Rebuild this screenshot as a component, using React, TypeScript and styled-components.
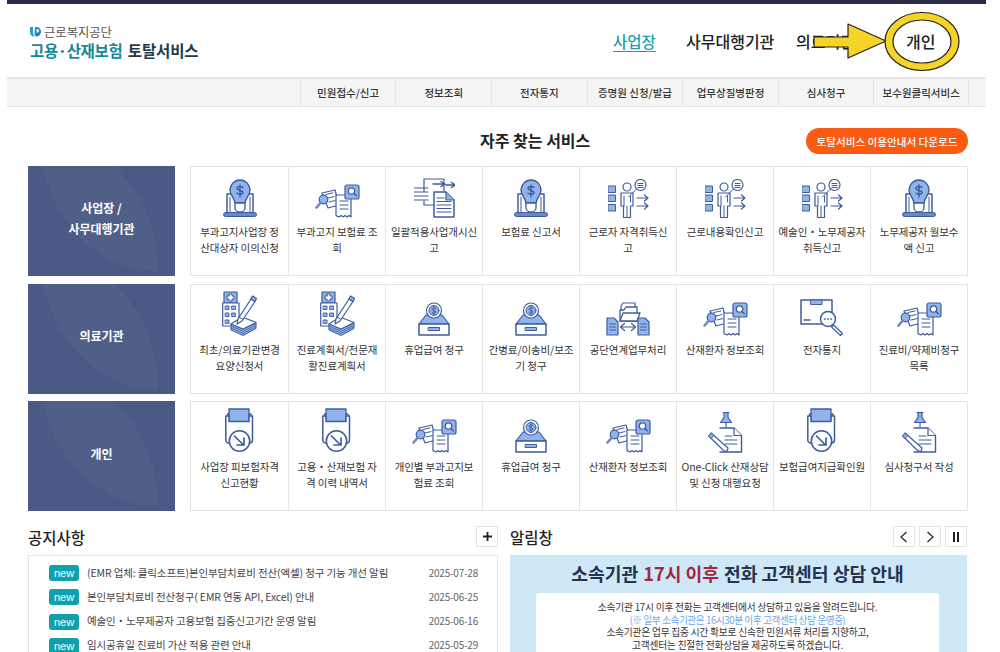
import React from "react";
import styled, { createGlobalStyle } from "styled-components";

const S = "#3f5c9c";
const F = "#8fb3ea";

const Global = createGlobalStyle`
  html, body { margin: 0; padding: 0; background: #fff; overflow: hidden; }
  body { font-family: "Noto Sans CJK KR", "Noto Sans", sans-serif; color: #333; }
  * { box-sizing: border-box; }
`;

const Shell = styled.div`
  position: relative;
  width: 979px;
  height: 652px;
  margin-left: 7px;
  overflow: hidden;
`;
const TopBar = styled.div`
  height: 4px;
  background: #2b2b47;
`;
const Header = styled.header`
  height: 73px;
  display: flex;
  align-items: center;
  justify-content: space-between;
  padding: 0 29px 0 23px;
`;
const Logo = styled.div`
  display: flex;
  flex-direction: column;
  gap: 1px;
  margin-top: 3px;
`;
const LogoTop = styled.div`
  display: flex;
  align-items: center;
  gap: 3px;
  font-size: 12.3px;
  line-height: 14px;
  color: #555;
`;
const LogoMain = styled.div`
  font-size: 15.5px;
  line-height: 20px;
  font-weight: 700;
  color: #1f3b4a;
  white-space: nowrap;
  letter-spacing: -0.1px;
  span { color: #14899a; letter-spacing: -0.35px; margin-right: 2px; }
`;
const Nav = styled.nav`
  display: grid;
  grid-template-columns: 73px 110px 110px 51px;
  align-items: center;
  margin-top: 1px;
`;
const NavItem = styled.a<{ $active?: boolean }>`
  font-size: ${(p) => (p.$active ? "15.5px" : "16px")};
  line-height: 22px;
  font-weight: 500;
  white-space: nowrap;
  color: ${(p) => (p.$active ? "#1aa0b2" : "#222")};
  text-decoration: ${(p) => (p.$active ? "underline" : "none")};
  text-underline-offset: 3px;
`;
const Callout = styled.svg`
  position: absolute;
  left: 798px;
  top: 11px;
  width: 156px;
  height: 62px;
`;
const SubNav = styled.div`
  height: 30px;
  display: flex;
  justify-content: flex-end;
  padding-right: 17px;
  background: #f5f5f5;
  border-top: 2px solid #e8e8e8;
  border-bottom: 1px solid #e4e4e4;
`;
const SubItem = styled.a`
  width: 95.6px;
  display: flex;
  align-items: center;
  justify-content: center;
  border-left: 1px solid #e4e4e4;
  font-size: 10.5px;
  font-weight: 500;
  color: #333;
  white-space: nowrap;
  &:last-child { border-right: 1px solid #e4e4e4; }
`;
const Content = styled.main`
  padding: 21px 18px 0 21px;
`;
const SectionHead = styled.div`
  height: 26px;
  display: flex;
  align-items: center;
  margin-bottom: 12px;
`;
const SectionTitle = styled.h2`
  margin: -3px 0 0 452px;
  font-size: 16px;
  font-weight: 700;
  color: #222;
  white-space: nowrap;
`;
const OrangeButton = styled.a`
  margin-left: auto;
  width: 162px;
  height: 26px;
  border-radius: 13px;
  background: #fb5a12;
  color: #fff;
  font-size: 10.6px;
  font-weight: 500;
  display: flex;
  align-items: center;
  justify-content: center;
  white-space: nowrap;
`;
const Rows = styled.div`
  display: flex;
  flex-direction: column;
  gap: 7.5px;
`;
const Row = styled.section`
  height: 110px;
  display: grid;
  grid-template-columns: 147px 1fr;
  gap: 15px;
`;
const RowLabel = styled.div`
  position: relative;
  overflow: hidden;
  display: flex;
  align-items: center;
  justify-content: center;
  text-align: center;
  padding-bottom: 6px;
  background: #4a5a84;
  color: #fff;
  font-size: 12px;
  font-weight: 700;
  line-height: 21px;
  &::before {
    content: "";
    position: absolute;
    left: 12px;
    top: -30px;
    width: 118px;
    height: 135px;
    background: rgba(255, 255, 255, 0.035);
    border-radius: 0 100% 0 100%;
  }
  span { position: relative; }
`;
const Cells = styled.div`
  display: grid;
  grid-template-columns: repeat(8, 1fr);
  border: 1px solid #e3e3e3;
`;
const Cell = styled.a`
  display: flex;
  flex-direction: column;
  align-items: center;
  padding: 7px 2px 0;
  border-left: 1px solid #e6e6e6;
  &:first-child { border-left: 0; }
`;
const IconSlot = styled.div`
  height: 44px;
  margin-bottom: 6px;
  display: flex;
  align-items: flex-end;
  justify-content: center;
`;
const CellText = styled.div`
  width: 100%;
  text-align: center;
  font-size: 10.5px;
  line-height: 16px;
  letter-spacing: -0.1px;
  color: #333;
  white-space: pre-line;
`;
const Bottom = styled.div`
  display: grid;
  grid-template-columns: 470px 457px;
  gap: 12px;
  margin-top: 15px;
`;
const Column = styled.section`
  display: flex;
  flex-direction: column;
  gap: 8px;
`;
const ColHead = styled.div`
  height: 21px;
  display: flex;
  align-items: center;
  justify-content: space-between;
`;
const ColTitle = styled.h3`
  margin: 0;
  font-size: 15.5px;
  font-weight: 500;
  color: #222;
`;
const Controls = styled.div`
  display: flex;
  gap: 4px;
`;
const SquareButton = styled.button`
  width: 22px;
  height: 21px;
  padding: 0;
  background: #fff;
  border: 1px solid #e4e4e4;
  display: flex;
  align-items: center;
  justify-content: center;
`;
const NoticeBox = styled.div`
  height: 120px;
  padding: 9px 19px 0 20px;
  border: 1px solid #e4e4e4;
  display: flex;
  flex-direction: column;
  gap: 8.3px;
`;
const NoticeRow = styled.div`
  height: 16px;
  display: flex;
  align-items: center;
`;
const NewBadge = styled.span`
  flex: none;
  width: 30px;
  height: 16px;
  border-radius: 3px;
  background: #12a0ad;
  color: #fff;
  font-family: "Liberation Sans", sans-serif;
  font-size: 11px;
  line-height: 16px;
  text-align: center;
`;
const NoticeText = styled.span`
  margin: -2px 0 0 8px;
  font-size: 10.5px;
  color: #444;
  white-space: nowrap;
  letter-spacing: -0.12px;
`;
const NoticeDate = styled.span`
  margin: -2px 0 0 auto;
  font-size: 10px;
  color: #666;
  letter-spacing: -0.2px;
`;
const Banner = styled.div`
  height: 120px;
  background: #cfe8f8;
  padding: 0 28px 0 26px;
`;
const BannerTitle = styled.div`
  height: 38px;
  padding-bottom: 2px;
  display: flex;
  align-items: center;
  justify-content: center;
  font-size: 18.2px;
  font-weight: 700;
  color: #27324e;
  white-space: nowrap;
  gap: 5px;
  em { font-style: normal; color: #a3283f; }
`;
const BannerBody = styled.div`
  height: 80px;
  background: #fff;
  border-radius: 3px;
  padding-top: 8px;
  text-align: center;
  font-size: 9.7px;
  line-height: 12.6px;
  letter-spacing: -0.2px;
  color: #333;
`;
const BlueLine = styled.div`
  color: #6aa8e8;
  letter-spacing: -0.45px;
`;

const Svg = ({ w, h, children }: { w: number; h: number; children: React.ReactNode }) => (
  <svg width={w} height={h} viewBox={`0 0 ${w} ${h}`} fill="none" stroke={S} strokeWidth={1.2} strokeLinejoin="round" strokeLinecap="round">
    {children}
  </svg>
);

const Bulb = () => (
  <Svg w={34} h={39}>
    <path d="M4 33V15h6M30 33V15h-6" strokeWidth={1.5} />
    <path d="M7 33V18M27 33V18" strokeWidth={1} />
    <path d="M17 1c6 0 10 5 10 10 0 5-4 7-5 13H12c-1-6-5-8-5-13C7 6 11 1 17 1z" fill={F} strokeWidth={1.4} />
    <path d="M12 24h10v5a5 4 0 0 1-10 0z" fill="#fff" strokeWidth={1.3} />
    <path d="M20 8.5c-1-1.5-6-1.5-6 .8 0 2.7 6 1.4 6 4.2 0 2.4-5 2.2-6 .7M17 6v12" strokeWidth={1.4} />
    <rect x="0.5" y="33.5" width="33" height="4" rx="2" fill="#6f88bb" strokeWidth={1} />
  </Svg>
);

const ReceiptSearch = () => (
  <Svg w={45} h={34}>
    <path d="M7 9l13-3 4 15-11 3z" fill="#fff" />
    <path d="M11 10.500l7-1.600M13 14l6-1.400M14 18l6-1.400" strokeWidth={1} />
    <circle cx="8.500" cy="15.500" r="4.300" fill={F} />
    <path d="M5.500 19L1.500 23.500" strokeWidth={2.6} stroke="#6f88bb" />
    <path d="M21 11h15v22l-2-1.400-2 1.400-2-1.400-2 1.400-2-1.400-2 1.400-3-1.400z" fill="#fff" />
    <path d="M25 17h8M25 21h8M25 25h8" strokeWidth={1} />
    <rect x="30" y="1" width="14" height="14" rx="2" fill={F} />
    <circle cx="36.500" cy="7" r="3.200" fill="#fff" strokeWidth={1.3} />
    <path d="M39 9.500l2.300 2.300" strokeWidth={1.5} />
  </Svg>
);

const DocArrows = () => (
  <Svg w={41} h={40}>
    <path d="M10 14V1h20v12" />
    <path d="M0 10h14M0 14h14M0 18h14M0 22h14" strokeWidth={1.2} />
    <path d="M19 6h12M27 3.500l3.500 2.500-3.500 2.500M32 7h9M37.500 4.500L41 7l-3.500 2.500" strokeWidth={1.5} />
    <path d="M10 23v4h10" />
    <path d="M20 14h12l8 8v17H20z" fill="#fff" strokeWidth={1.5} />
    <path d="M32 14v8h8" fill={F} />
    <path d="M23 20h7M23 23.500h14M23 27h14M23 30.500h14M23 34h14" strokeWidth={1.2} />
  </Svg>
);

const PersonQueue = () => (
  <Svg w={41} h={39}>
    <g fill={F} strokeWidth={1}>
      <rect x="0.500" y="7" width="7" height="6.500" />
      <rect x="0.500" y="16" width="7" height="6.500" />
      <rect x="0.500" y="25.500" width="7" height="6.500" />
    </g>
    <circle cx="19" cy="8" r="4" />
    <path d="M13 14h12v13h-2.500v11.500h-7V27H13z" fill="#fff" />
    <path d="M16 17v10M22.500 17v6M19 27v11.500" strokeWidth={1} />
    <circle cx="32.500" cy="6" r="5.500" fill="#fff" />
    <path d="M30 4.500h5M30 6.500h5M30 8.500h5" strokeWidth={1} />
    <path d="M28.500 10l-8 8" strokeWidth={1} />
    <path d="M29 19h11M36.500 16l3.500 3-3.500 3M29 27h11M36.500 24l3.500 3-3.500 3" strokeWidth={1.2} />
  </Svg>
);

const HospitalPen = () => (
  <Svg w={35} h={45}>
    <rect x="2" y="1" width="13" height="11" fill={F} />
    <path d="M7 3h3v2h2v3h-2v2H7V8H5V5h2z" fill="#fff" strokeWidth={1} />
    <path d="M0.700 12h16.300v23H0.700z" fill="#fff" />
    <g fill={F} strokeWidth={0.9}>
      <rect x="3.500" y="15" width="3.500" height="3.500" />
      <rect x="10" y="15" width="3.500" height="3.500" />
      <rect x="3.500" y="22" width="3.500" height="3.500" />
      <rect x="10" y="22" width="3.500" height="3.500" />
      <rect x="3.500" y="29" width="3.500" height="3.500" />
    </g>
    <path d="M9 33v6l12 5.500 13-7v-6L21 38z" fill={F} strokeWidth={1} />
    <path d="M9 35l12 5.500 13-7M9 37l12 5.500 13-7" strokeWidth={0.8} />
    <path d="M9 33l11-7 14 5.500L21 38z" fill="#fff" />
    <path d="M15 33l1-5L29 8l4 2.500L20 30z" fill="#fff" />
    <path d="M29 8l1.500-3 4 2.500L33 10.500z" fill={F} />
    <path d="M17 26l4 2.500" strokeWidth={1} />
  </Svg>
);

const CoinBox = () => (
  <Svg w={32} h={34}>
    <path d="M8 13l-7 9h30l-7-9z" fill={F} />
    <path d="M1 22h30v11H1z" fill="#fff" strokeWidth={1.5} />
    <circle cx="16" cy="8.500" r="7.500" fill="#fff" />
    <circle cx="16" cy="8.500" r="5" fill={F} strokeWidth={1} />
    <path d="M18 6.500c-1-1-4-1-4 .7s4 1 4 2.800-3 1.600-4 .6M16 4.500v8" strokeWidth={0.9} />
    <rect x="10.500" y="25.500" width="11" height="3" fill={F} strokeWidth={1} />
  </Svg>
);

const FolderDocs = () => (
  <Svg w={44} h={35}>
    <path d="M15 17V5l2-3h12v6" fill="#fff" />
    <path d="M14 20V9h4l2-3h11v14z" fill="#fff" strokeWidth={1.3} />
    <path d="M14 20l3-8h17l-3 8z" fill="#fff" strokeWidth={1.3} />
    <path d="M1 17h7l4 4v13H1z" fill={F} />
    <path d="M32 17h7l4 4v13H32z" fill={F} />
    <path d="M3.500 23h6M3.500 26h6M3.500 29h6M34.500 23h6M34.500 26h6M34.500 29h6" strokeWidth={0.9} />
    <path d="M16 26h12M18.500 22.500L14.500 26l4 3.500M25.500 22.500l4 3.500-4 3.500" strokeWidth={1.2} />
  </Svg>
);

const BoxSearch = () => (
  <Svg w={45} h={37}>
    <path d="M1 1h31v24H1z" fill="#fff" strokeWidth={1.5} />
    <rect x="11" y="1" width="11" height="4.500" fill={F} strokeWidth={1} />
    <path d="M4 21h6" strokeWidth={1.4} />
    <circle cx="28" cy="20" r="7.500" fill="#fff" strokeWidth={1.5} />
    <path d="M24.500 20h.6M27.700 20h.6M30.900 20h.6" strokeWidth={1.6} />
    <path d="M33.500 26l9 8.500-2 2-9-8.500z" fill="#fff" strokeWidth={1.2} />
  </Svg>
);

const TrayArrow = () => (
  <Svg w={30} h={45}>
    <path d="M4 14V1h20v13z" fill={F} strokeWidth={1.3} />
    <path d="M2.500 15V6h1.500M26 15V6h-2" strokeWidth={1.3} />
    <path d="M0.800 8h3.200v5.500h20V8h3.500v24c0 2-1 3-3 3H4c-2 0-3.200-1-3.200-3z" fill="#fff" strokeWidth={1.5} />
    <circle cx="14.500" cy="33" r="10.200" fill="#fff" strokeWidth={1.6} />
    <path d="M9.500 28l9 9M19 30v7h-7" strokeWidth={1.7} />
  </Svg>
);

const PinDoc = () => (
  <Svg w={35} h={42}>
    <path d="M15 1.500h6M16 1.500v5l-3.500 5h11l-3.500-5v-5z" fill={F} strokeWidth={1.2} />
    <path d="M18 11.500v8" strokeWidth={1.1} />
    <path d="M12 17h14l7.500 7.500V41H12" fill="#fff" strokeWidth={1.4} />
    <path d="M26 17v7.500h7.500" fill="#fff" strokeWidth={1.2} />
    <path d="M17 25h7M17 29h12M17 33h12" strokeWidth={1.1} />
    <path d="M3 22l17 15-1 3.500-3.500-1L0.800 25z" fill="#fff" strokeWidth={1.2} />
    <path d="M0.800 25L3 22l2.700 2.400-2.500 3z" fill={F} strokeWidth={1} />
  </Svg>
);

type Item = [React.FC, string];

const rows: { label: React.ReactNode; items: Item[] }[] = [
  {
    label: (<>사업장 /<br />사무대행기관</>),
    items: [
      [Bulb, "부과고지사업장 정\n산대상자 이의신청"],
      [ReceiptSearch, "부과고지 보험료 조\n회"],
      [DocArrows, "일괄적용사업개시신\n고"],
      [Bulb, "보험료 신고서"],
      [PersonQueue, "근로자 자격취득신\n고"],
      [PersonQueue, "근로내용확인신고"],
      [PersonQueue, "예술인・노무제공자\n취득신고"],
      [Bulb, "노무제공자 월보수\n액 신고"],
    ],
  },
  {
    label: "의료기관",
    items: [
      [HospitalPen, "최초/의료기관변경\n요양신청서"],
      [HospitalPen, "진료계획서/전문재\n활진료계획서"],
      [CoinBox, "휴업급여 청구"],
      [CoinBox, "간병료/이송비/보조\n기 청구"],
      [FolderDocs, "공단연계업무처리"],
      [ReceiptSearch, "산재환자 정보조회"],
      [BoxSearch, "전자통지"],
      [ReceiptSearch, "진료비/약제비청구\n목록"],
    ],
  },
  {
    label: "개인",
    items: [
      [TrayArrow, "사업장 피보험자격\n신고현황"],
      [TrayArrow, "고용・산재보험 자\n격 이력 내역서"],
      [ReceiptSearch, "개인별 부과고지보\n험료 조회"],
      [CoinBox, "휴업급여 청구"],
      [ReceiptSearch, "산재환자 정보조회"],
      [PinDoc, "One-Click 산재상담\n및 신청 대행요청"],
      [TrayArrow, "보험급여지급확인원"],
      [PinDoc, "심사청구서 작성"],
    ],
  },
];

const subMenu = ["민원접수/신고", "정보조회", "전자통지", "증명원 신청/발급", "업무상질병판정", "심사청구", "보수원클릭서비스"];

const notices = [
  ["(EMR 업체: 클릭소프트)본인부담치료비 전산(엑셀) 청구 기능 개선 알림", "2025-07-28"],
  ["본인부담치료비 전산청구( EMR 연동 API, Excel) 안내", "2025-06-25"],
  ["예술인・노무제공자 고용보험 집중신고기간 운영 알림", "2025-06-16"],
  ["임시공휴일 진료비 가산 적용 관련 안내", "2025-05-29"],
];

export default function App() {
  return (
    <>
      <Global />
      <Shell>
        <TopBar />
        <Header>
          <Logo>
            <LogoTop>
              <svg width="11" height="11" viewBox="0 0 11 11">
                <path d="M0 1h3v5.500c0 1.500.5 2.700 2 4C2 10.800 0 9 0 6z" fill="#19a7b5" />
                <path d="M5 1c3.500-.5 6 1 6 4.500S8 11 6 10.500C5 9.500 4.500 8.500 4.500 7z" fill="#2c7fc9" />
                <path d="M6.500 3v3.500c1.500.2 2.500-.5 2.500-1.800S8 3 6.500 3z" fill="#fff" />
              </svg>
              근로복지공단
            </LogoTop>
            <LogoMain><span>고용·산재보험</span> 토탈서비스</LogoMain>
          </Logo>
          <Nav>
            <NavItem $active>사업장</NavItem>
            <NavItem>사무대행기관</NavItem>
            <NavItem>의료기관</NavItem>
            <NavItem>개인</NavItem>
          </Nav>
        </Header>
        <Callout viewBox="0 0 156 62">
          <path d="M9 26h34v-13l38 17-38 17V36H9z" fill="#f5d327" stroke="#222" strokeWidth="1.2" strokeLinejoin="round" />
          <path fillRule="evenodd" d="M80 30.500a37 29 0 1 0 74 0a37 29 0 1 0 -74 0zM88 30.500a29 21.500 0 1 1 58 0a29 21.500 0 1 1 -58 0z" fill="#f5d327" stroke="#222" strokeWidth="1.2" />
        </Callout>
        <SubNav>
          {subMenu.map((m) => <SubItem key={m}>{m}</SubItem>)}
        </SubNav>
        <Content>
          <SectionHead>
            <SectionTitle>자주 찾는 서비스</SectionTitle>
            <OrangeButton>토탈서비스 이용안내서 다운로드</OrangeButton>
          </SectionHead>
          <Rows>
            {rows.map((r, i) => (
              <Row key={i}>
                <RowLabel><span>{r.label}</span></RowLabel>
                <Cells>
                  {r.items.map(([Icon, text], j) => (
                    <Cell key={j}>
                      <IconSlot><Icon /></IconSlot>
                      <CellText>{text}</CellText>
                    </Cell>
                  ))}
                </Cells>
              </Row>
            ))}
          </Rows>
          <Bottom>
            <Column>
              <ColHead>
                <ColTitle>공지사항</ColTitle>
                <SquareButton aria-label="더보기">
                  <svg width="11" height="11" viewBox="0 0 11 11"><path d="M5.500 1v9M1 5.500h9" stroke="#222" strokeWidth="1.8" /></svg>
                </SquareButton>
              </ColHead>
              <NoticeBox>
                {notices.map(([t, d]) => (
                  <NoticeRow key={d}>
                    <NewBadge>new</NewBadge>
                    <NoticeText>{t}</NoticeText>
                    <NoticeDate>{d}</NoticeDate>
                  </NoticeRow>
                ))}
              </NoticeBox>
            </Column>
            <Column>
              <ColHead>
                <ColTitle>알림창</ColTitle>
                <Controls>
                  <SquareButton aria-label="이전">
                    <svg width="10" height="12" viewBox="0 0 10 12"><path d="M7.500 1L2 6l5.500 5" fill="none" stroke="#222" strokeWidth="1.2" /></svg>
                  </SquareButton>
                  <SquareButton aria-label="다음">
                    <svg width="10" height="12" viewBox="0 0 10 12"><path d="M2.500 1L8 6l-5.500 5" fill="none" stroke="#222" strokeWidth="1.2" /></svg>
                  </SquareButton>
                  <SquareButton aria-label="정지">
                    <svg width="10" height="10" viewBox="0 0 10 10"><path d="M2 0h2v10H2zM6 0h2v10H6z" fill="#222" /></svg>
                  </SquareButton>
                </Controls>
              </ColHead>
              <Banner>
                <BannerTitle>소속기관 <em>17시 이후</em> 전화 고객센터 상담 안내</BannerTitle>
                <BannerBody>
                  소속기관 17시 이후 전화는 고객센터에서 상담하고 있음을 알려드립니다.
                  <BlueLine>(※ 일부 소속기관은 16시30분 이후 고객센터 상담 운영중)</BlueLine>
                  소속기관은 업무 집중 시간 확보로 신속한 민원서류 처리를 지향하고,
                  <br />
                  고객센터는 친절한 전화상담을 제공하도록 하겠습니다.
                </BannerBody>
              </Banner>
            </Column>
          </Bottom>
        </Content>
      </Shell>
    </>
  );
}
